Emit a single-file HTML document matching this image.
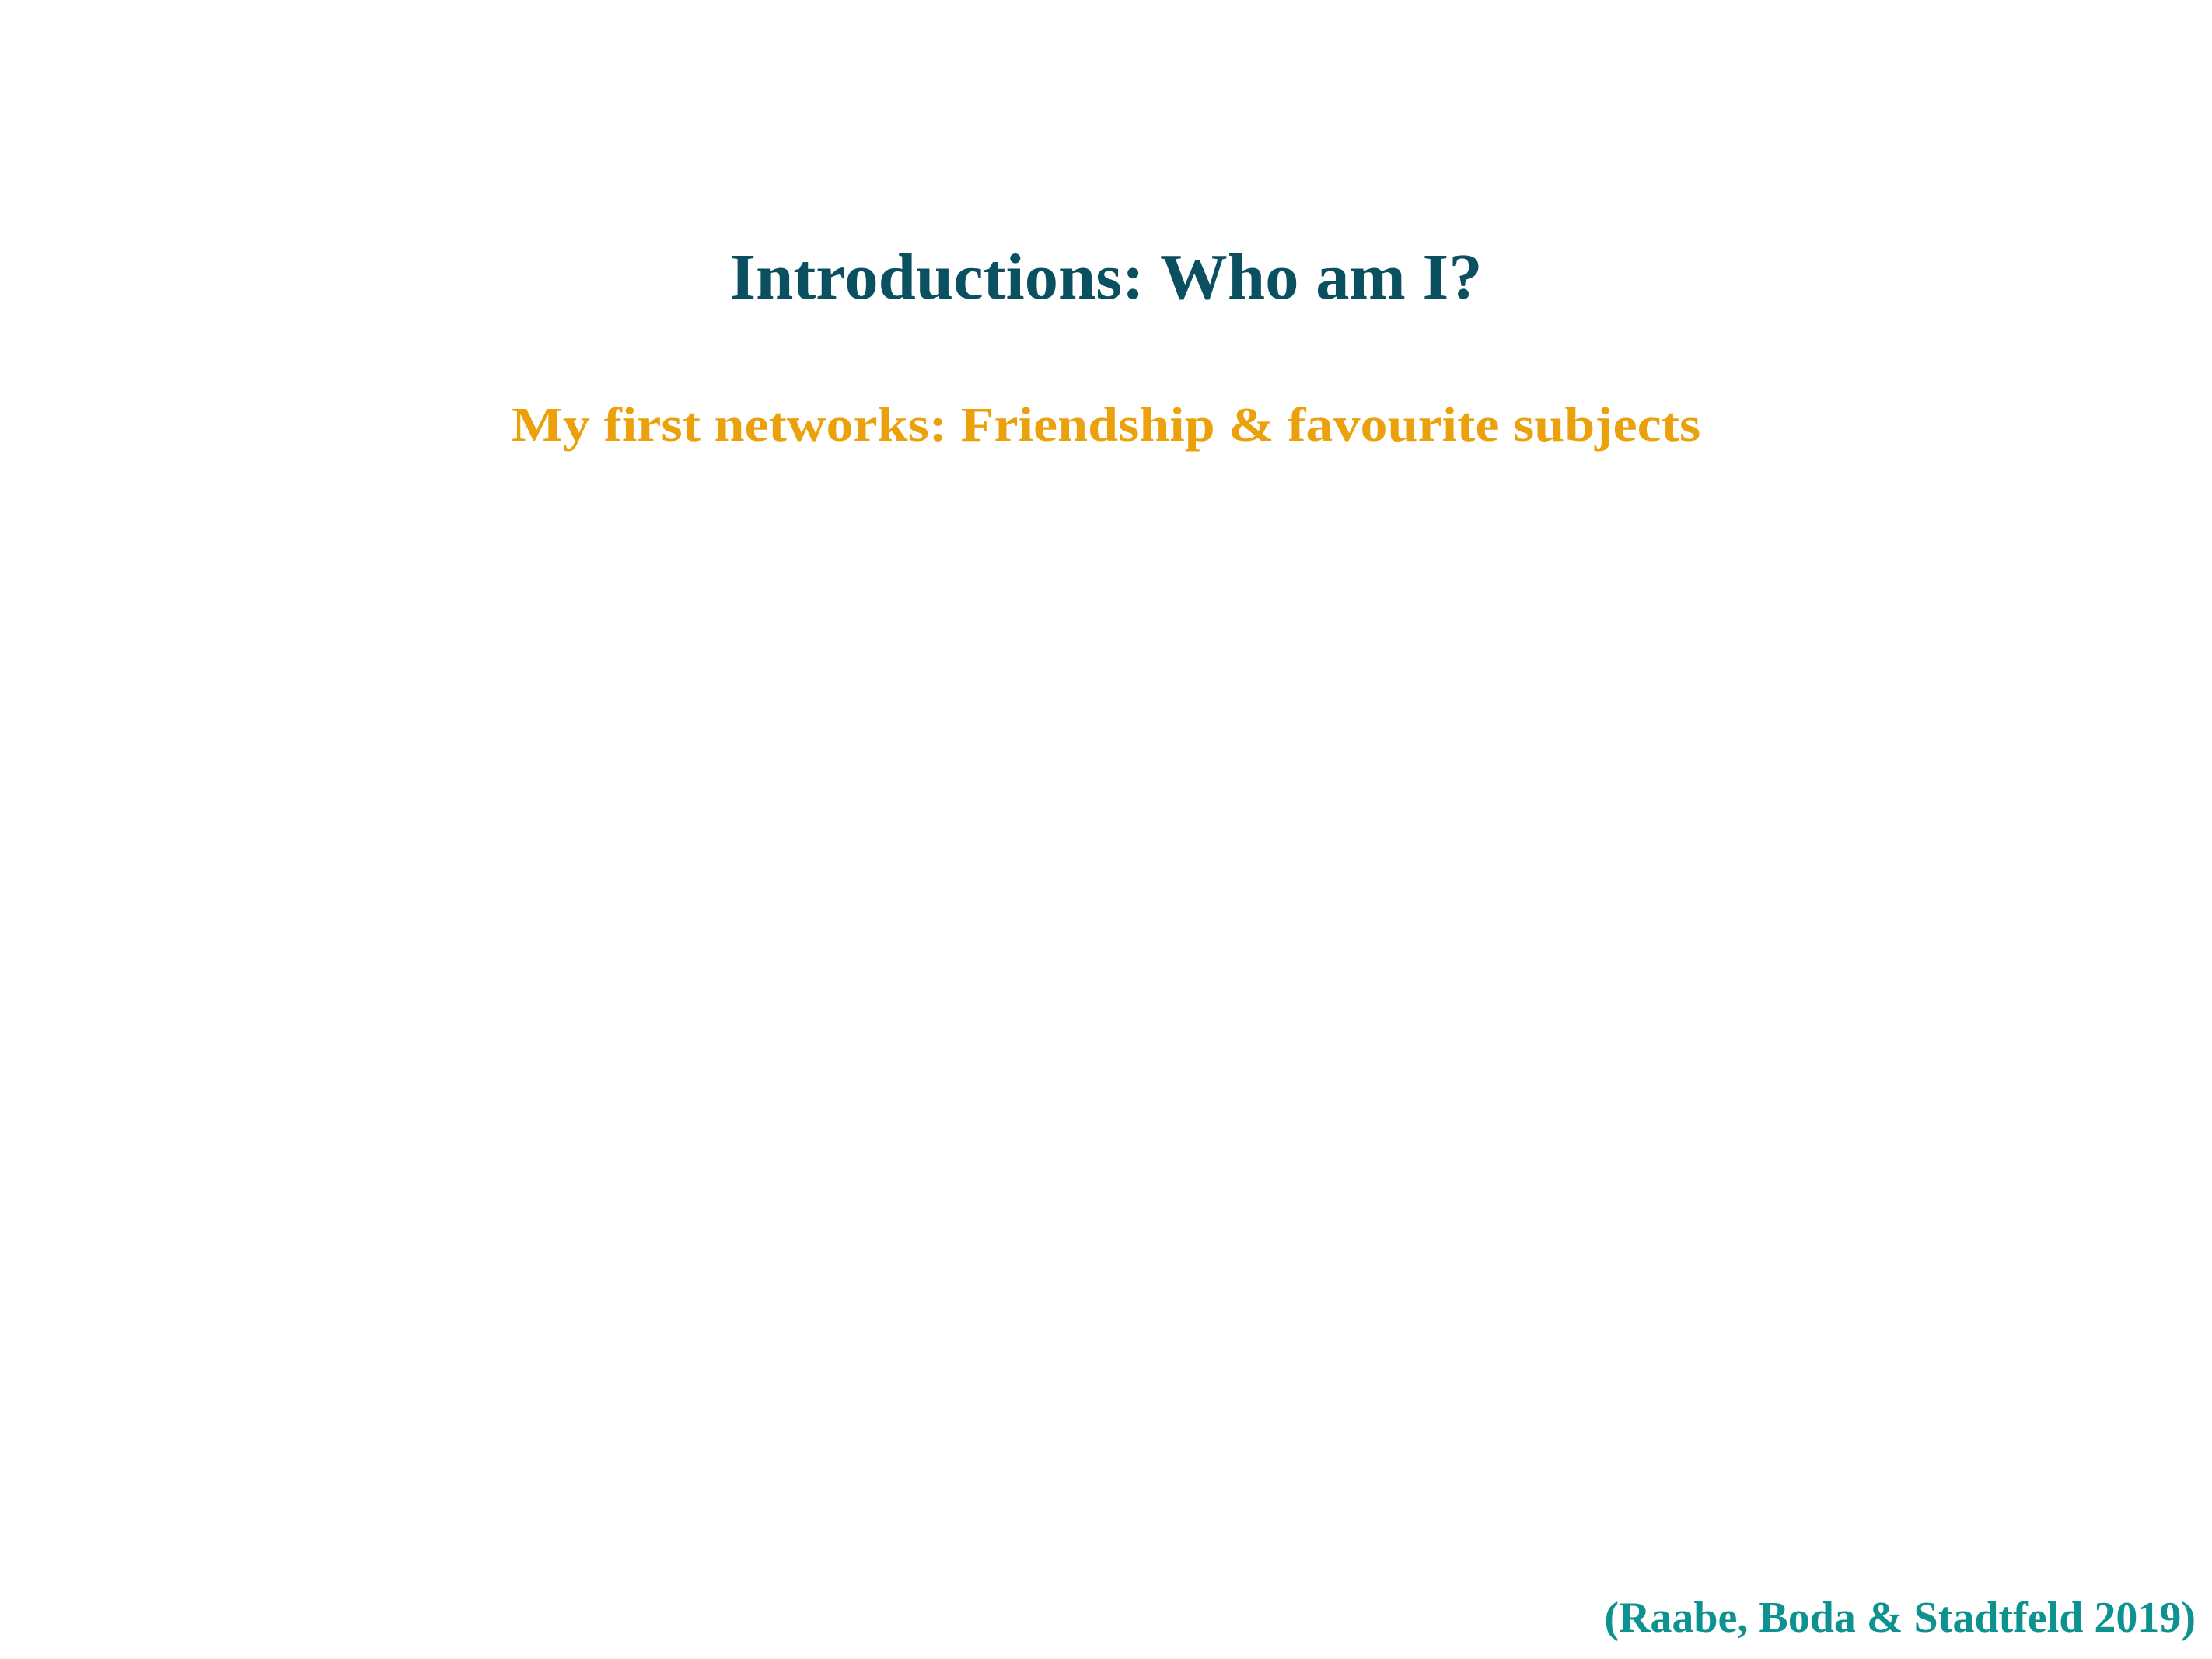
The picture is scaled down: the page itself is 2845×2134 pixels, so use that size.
<!DOCTYPE html>
<html><head><meta charset="utf-8"><style>
html,body{margin:0;padding:0;background:#fff;}
body{width:2845px;height:2134px;position:relative;overflow:hidden;font-family:"Liberation Serif",serif;font-weight:bold;}
div{position:absolute;line-height:1;white-space:nowrap;}
#t{left:0;width:2845px;text-align:center;top:315px;font-size:84px;color:#0b5060;transform:scaleX(1.033);transform-origin:1422px 0;}
#s{left:0;width:2845px;text-align:center;top:516px;font-size:62px;color:#eba10c;transform:scaleX(1.13);transform-origin:1422px 0;}
#c{right:21px;top:2053px;font-size:56px;color:#0e928f;}
</style></head><body>
<div id="t">Introductions: Who am I?</div>
<div id="s">My first networks: Friendship &amp; favourite subjects</div>
<div id="c">(Raabe, Boda &amp; Stadtfeld 2019)</div>
</body></html>
